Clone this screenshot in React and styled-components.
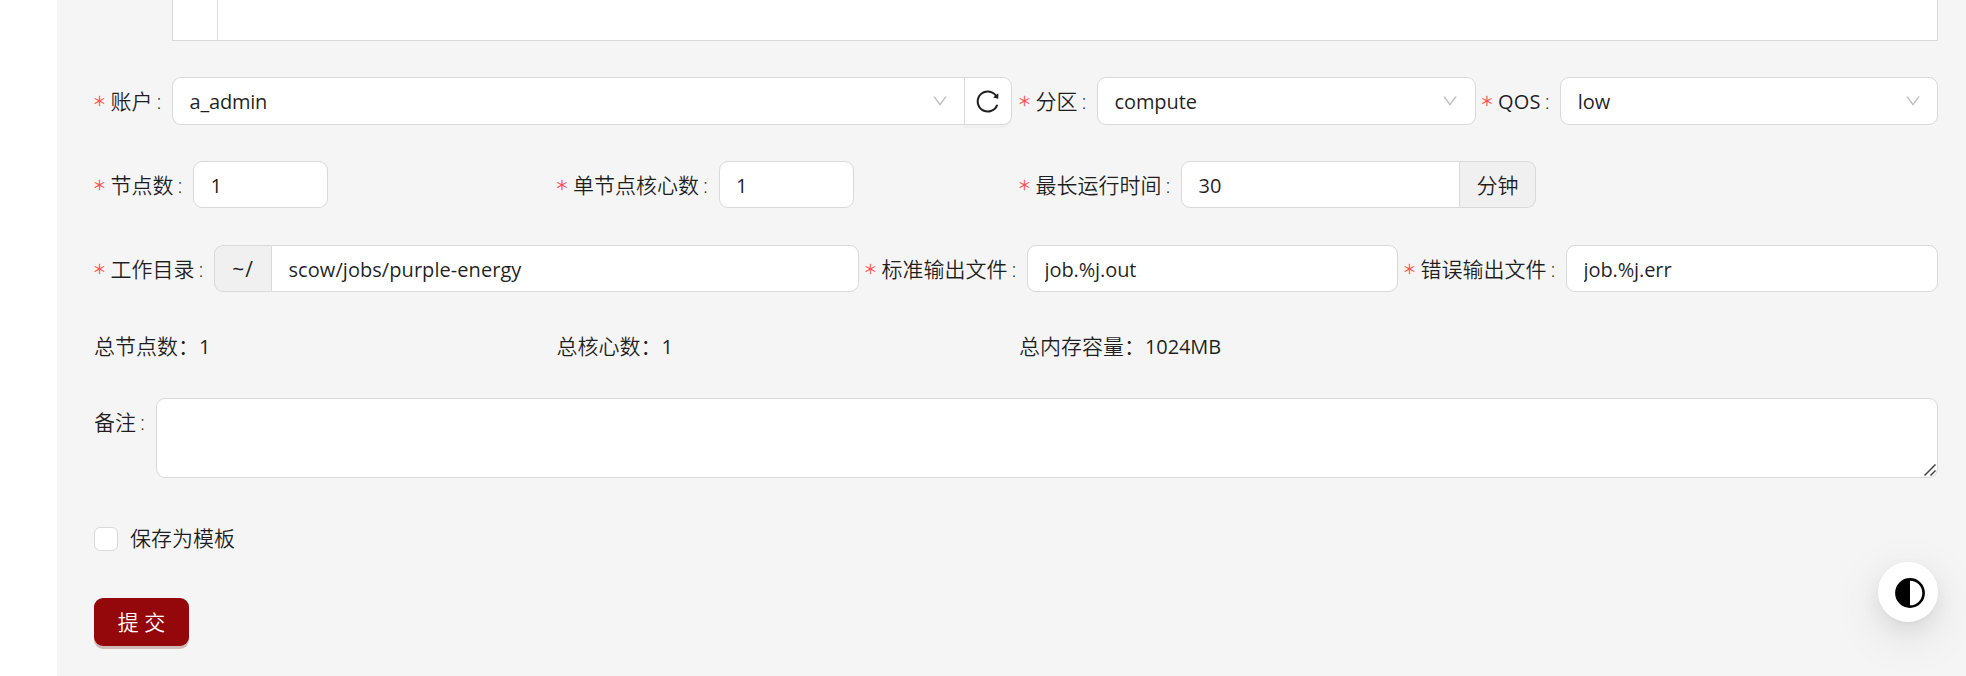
import React, { useState } from 'react';
import styled, { createGlobalStyle, css } from 'styled-components';
import { AiOutlineDown, AiOutlineReload } from 'react-icons/ai';

const GlobalStyle = createGlobalStyle`
  * {
    box-sizing: border-box;
  }

  body {
    margin: 0;
    background: #fff;
    color: rgba(0, 0, 0, 0.88);
    font-family: "Open Sans", "Noto Sans CJK SC", sans-serif;
    font-size: 21px;
    line-height: 33px;
    overflow: hidden;
  }
`;

const Page = styled.div`
  height: 676px;
  padding-left: 57px;
`;

const Content = styled.main`
  height: 676px;
  padding: 0 28px 0 37px;
  background: #f5f5f5;
`;

const Editor = styled.div`
  display: flex;
  height: 41px;
  margin: 0 0 36px 78px;
  background: #fff;
  border: 1px solid #d9d9d9;
  border-top: none;
`;

const EditorGutter = styled.div`
  width: 45px;
  border-right: 1px solid #ddd;
`;

const Row = styled.div`
  display: grid;
  grid-template-columns: ${props => props.$columns};
  column-gap: 6px;
  height: ${props => props.$height || 48}px;
  margin-bottom: ${props => props.$gap || 36}px;
`;

const Item = styled.div`
  position: relative;
  display: flex;
  align-items: flex-start;
  min-width: 0;
`;

const LabelBox = styled.label`
  display: flex;
  align-items: center;
  flex: none;
  height: 48px;
  font-weight: 350;
  white-space: nowrap;
`;

const Star = styled.span`
  width: 10.5px;
  margin: 7px 6px 0 0;
  color: #ff4d4f;
  font-family: "DejaVu Sans", sans-serif;
  font-size: 22px;
  font-weight: 200;
  -webkit-text-stroke: 0.4px #ff4d4f;
`;

const Colon = styled.span`
  width: 4.5px;
  margin: 0 11px 0 4px;
  font-family: "Open Sans", sans-serif;
`;

const Latin = styled.span`
  font-family: "Open Sans", sans-serif;
  font-size: ${props => props.$size || 20}px;
  font-weight: 400;
  letter-spacing: ${props => props.$spacing || 0}px;
`;

const box = css`
  background: #fff;
  border: 1px solid #d9d9d9;
  border-radius: 9px;
`;

const Select = styled.div`
  ${box}
  display: flex;
  flex: 1;
  align-items: center;
  justify-content: space-between;
  height: 48px;
  padding: 0 15.5px 0 16.5px;
  cursor: pointer;

  ${props => props.$joined && css`
    border-right: none;
    border-radius: 9px 0 0 9px;
  `}

  svg {
    width: 18px;
    height: 18px;
    color: rgba(0, 0, 0, 0.25);
  }
`;

const ReloadButton = styled.button`
  ${box}
  display: flex;
  align-items: center;
  justify-content: center;
  width: 48px;
  height: 48px;
  margin-right: 1px;
  padding: 0 2px 0 0;
  border-radius: 0 9px 9px 0;
  box-shadow: 0 3px 0 rgba(0, 0, 0, 0.02);
  color: rgba(0, 0, 0, 0.88);
  cursor: pointer;
`;

const Input = styled.input`
  ${box}
  flex: ${props => (props.$width ? 'none' : 1)};
  width: ${props => (props.$width ? `${props.$width}px` : 'auto')};
  min-width: 0;
  height: 47px;
  padding: 2px 16.5px 0;
  color: inherit;
  font-family: "Open Sans", sans-serif;
  font-size: 20px;
  letter-spacing: ${props => props.$spacing || 0}px;
  outline: none;

  ${props => props.$joined === 'left' && css`
    border-radius: 0 9px 9px 0;
  `}

  ${props => props.$joined === 'right' && css`
    border-radius: 9px 0 0 9px;
  `}
`;

const Addon = styled.span`
  display: flex;
  align-items: center;
  justify-content: center;
  width: ${props => props.$width}px;
  height: 47px;
  padding-top: 1px;
  background: #f0f0f0;
  border: 1px solid #d9d9d9;
  font-weight: 350;

  ${props => (props.$side === 'left' ? css`
    border-right: none;
    border-radius: 9px 0 0 9px;
  ` : css`
    border-left: none;
    border-radius: 0 9px 9px 0;
  `)}
`;

const Summary = styled.div`
  padding-top: 1px;
  font-weight: 350;
  white-space: pre;
`;

const TextArea = styled.textarea`
  ${box}
  display: block;
  flex: 1;
  height: 80px;
  padding: 6px 16.5px;
  outline: none;
  resize: none;
`;

// sits over the textarea's bottom right corner
const ResizeGrip = styled.svg`
  position: absolute;
  right: 2px;
  bottom: 3px;
  cursor: ns-resize;
`;

const CheckLabel = styled.label`
  display: flex;
  align-items: center;
  height: 48px;
  font-weight: 350;
  cursor: pointer;
`;

const CheckText = styled.span`
  padding-bottom: 2px;
`;

const Checkbox = styled.input`
  ${box}
  appearance: none;
  width: 24px;
  height: 24px;
  margin: 0 12px 0 0;
  border-radius: 6px;

  &:checked {
    background: #94070a;
  }
`;

const SubmitButton = styled.button`
  width: 95px;
  height: 48px;
  padding: 0 0 2px;
  background: #94070a;
  border: none;
  border-radius: 9px;
  box-shadow: 0 3px 0 #cfb9b9;
  color: #fff;
  font-family: inherit;
  font-size: 21px;
  font-weight: 350;
  cursor: pointer;
`;

const FloatButton = styled.button`
  position: fixed;
  right: 28px;
  bottom: 54px;
  width: 60px;
  height: 60px;
  padding: 2px 0 0 3px;
  background: #fff;
  border: none;
  border-radius: 50%;
  box-shadow: 0 9px 24px 0 rgba(0, 0, 0, 0.08), 0 4.5px 9px -6px rgba(0, 0, 0, 0.12),
    0 13.5px 42px 12px rgba(0, 0, 0, 0.05);
  cursor: pointer;

  svg {
    display: block;
    margin: 0 auto;
  }
`;

const Label = ({ text, required, spacing }) => (
  <LabelBox>
    {required && <Star>*</Star>}
    {spacing === undefined ? text : <Latin $spacing={spacing}>{text}</Latin>}
    <Colon>:</Colon>
  </LabelBox>
);

const ContrastIcon = () => (
  <svg width="30" height="30" viewBox="0 0 30 30">
    <circle cx="15" cy="15" r="13.6" fill="none" stroke="#000" strokeWidth="2.6" />
    <path d="M15 1a14 14 0 0 0 0 28z" fill="#000" />
  </svg>
);

const App = () => {
  const [save, setSave] = useState(false);

  return (
    <Page>
      <GlobalStyle />
      <Content>
        <Editor>
          <EditorGutter />
        </Editor>
        <Row $columns="919px 456.5px 1fr">
          <Item>
            <Label required text="账户" />
            <Select $joined>
              <Latin $spacing={-0.2}>a_admin</Latin>
              <AiOutlineDown />
            </Select>
            <ReloadButton>
              <AiOutlineReload size={27} />
            </ReloadButton>
          </Item>
          <Item>
            <Label required text="分区" />
            <Select>
              <Latin $spacing={-0.1}>compute</Latin>
              <AiOutlineDown />
            </Select>
          </Item>
          <Item>
            <Label required text="QOS" spacing={0.2} />
            <Select>
              <Latin>low</Latin>
              <AiOutlineDown />
            </Select>
          </Item>
        </Row>
        <Row $columns="456.5px 456.5px 1fr">
          <Item>
            <Label required text="节点数" />
            <Input $width={135} defaultValue="1" />
          </Item>
          <Item>
            <Label required text="单节点核心数" />
            <Input $width={135} defaultValue="1" />
          </Item>
          <Item>
            <Label required text="最长运行时间" />
            <Input $width={279} $joined="right" defaultValue="30" />
            <Addon $width={76} $side="right">分钟</Addon>
          </Item>
        </Row>
        <Row $columns="765px 533px 1fr">
          <Item>
            <Label required text="工作目录" />
            <Addon $width={57} $side="left">
              <Latin $size={21} $spacing={1}>~/</Latin>
            </Addon>
            <Input $joined="left" $spacing={0.06} defaultValue="scow/jobs/purple-energy" />
          </Item>
          <Item>
            <Label required text="标准输出文件" />
            <Input $spacing={-0.1} defaultValue="job.%j.out" />
          </Item>
          <Item>
            <Label required text="错误输出文件" />
            <Input $spacing={-0.1} defaultValue="job.%j.err" />
          </Item>
        </Row>
        <Row $columns="456.5px 456.5px 1fr" $height={33}>
          <Summary>总节点数：<Latin>1</Latin></Summary>
          <Summary>总核心数：<Latin>1</Latin></Summary>
          <Summary>总内存容量：<Latin $spacing={-0.1}>1024MB</Latin></Summary>
        </Row>
        <Row $columns="1fr" $height={81}>
          <Item>
            <Label text="备注" />
            <TextArea />
            <ResizeGrip width="12" height="12" viewBox="0 0 12 12" fill="none" stroke="#444" strokeWidth="1.5">
              <path d="M0.5 11.5L11.5 0.5M6.5 11.5L11.5 6.5" />
            </ResizeGrip>
          </Item>
        </Row>
        <Row $columns="1fr" $gap={35}>
          <CheckLabel>
            <Checkbox type="checkbox" checked={save} onChange={() => setSave(!save)} />
            <CheckText>保存为模板</CheckText>
          </CheckLabel>
        </Row>
        <SubmitButton>提 交</SubmitButton>
      </Content>
      <FloatButton>
        <ContrastIcon />
      </FloatButton>
    </Page>
  );
};

export default App;
